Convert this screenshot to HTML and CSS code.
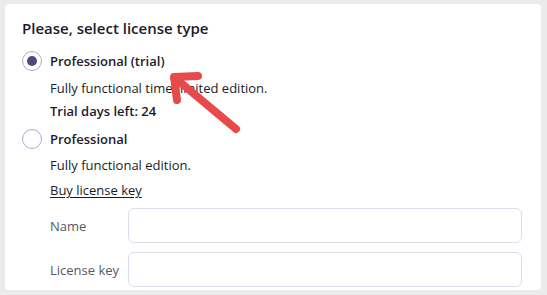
FILE: index.html
```html
<!DOCTYPE html>
<html>
<head>
<meta charset="utf-8">
<link rel="stylesheet" href="styles.css">
</head>
<body>
<div class="card">
  <h1 class="title">Please, select license type</h1>
  <div class="option">
    <span class="radio checked"><span class="dot"></span></span>
    <span class="opt-label">Professional (trial)</span>
  </div>
  <div class="line desc">Fully functional time-limited edition.</div>
  <div class="line strong">Trial days left: 24</div>
  <div class="option second">
    <span class="radio"></span>
    <span class="opt-label">Professional</span>
  </div>
  <div class="line desc">Fully functional edition.</div>
  <div class="line buy"><a href="#" class="link">Buy license key</a></div>
  <div class="field first">
    <label class="field-label">Name</label>
    <input class="input" type="text">
  </div>
  <div class="field">
    <label class="field-label">License key</label>
    <input class="input" type="text">
  </div>
</div>
<svg class="arrow" width="547" height="295" viewBox="0 0 547 295">
  <g stroke="#e8494b" stroke-width="8" stroke-linecap="round" stroke-linejoin="round" fill="none">
    <path d="M236 129 L175 78"/>
    <path d="M198 76 L174 77 L177 100"/>
  </g>
</svg>
</body>
</html>
```
FILE: styles.css
```css
html, body {
  margin: 0;
  padding: 0;
}
body {
  background: #ebebeb;
  width: 547px;
  height: 295px;
  position: relative;
  overflow: hidden;
  font-family: "Open Sans", "Noto Sans", sans-serif;
  color: #1b1b2b;
}
.card {
  box-sizing: border-box;
  margin: 4px 6px 0 5px;
  height: 286px;
  background: #ffffff;
  border-radius: 4px;
  padding: 14px 19px 0 17px;
  display: flex;
  flex-direction: column;
}
.title {
  margin: 0;
  font-size: 15px;
  font-weight: 600;
  line-height: 20px;
  height: 20px;
}
.option {
  display: flex;
  align-items: center;
  height: 22px;
  margin-top: 12px;
}
.option.second {
  margin-top: 6px;
}
.radio {
  box-sizing: border-box;
  width: 20px;
  height: 20px;
  border-radius: 50%;
  border: 1px solid #a9a9d4;
  display: flex;
  align-items: center;
  justify-content: center;
  margin-right: 8px;
  flex: none;
}
.dot {
  width: 10px;
  height: 10px;
  border-radius: 50%;
  background: #4b4b7c;
}
.opt-label {
  font-size: 13px;
  font-weight: 600;
  line-height: 22px;
}
.line {
  margin-left: 28px;
  font-size: 13px;
  line-height: 22px;
  height: 22px;
}
.desc {
  margin-top: 5px;
}
.strong {
  font-weight: 600;
  margin-top: 1px;
}
.option.second + .desc {
  margin-top: 4px;
}
.buy {
  margin-top: 3px;
}
.link {
  color: #1b1b2b;
  text-decoration: underline;
  text-underline-offset: 2px;
}
.field {
  display: flex;
  align-items: center;
  margin-left: 28px;
  margin-top: 9px;
}
.field.first {
  margin-top: 7px;
}
.field-label {
  width: 78px;
  flex: none;
  font-size: 13px;
  color: #575766;
}
.input {
  box-sizing: border-box;
  flex: 1;
  height: 35px;
  border: 1px solid #dcdcec;
  border-radius: 6px;
  background: #fff;
  outline: none;
}
.arrow {
  position: absolute;
  left: 0;
  top: 0;
  pointer-events: none;
}
```
